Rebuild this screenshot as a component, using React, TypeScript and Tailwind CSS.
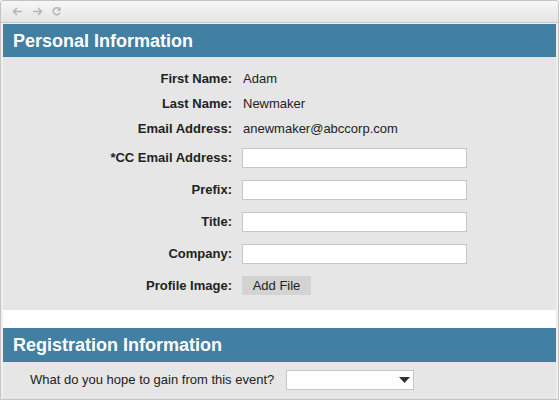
import React from "react";

const font = { fontFamily: '"Liberation Sans", Arial, Helvetica, sans-serif' };

function TextRow({ label, value }: { label: string; value: string }) {
  return (
    <div className="flex h-[25px] items-center">
      <div className="w-[229px] shrink-0 text-right font-bold text-[13px] text-[#222]">{label}</div>
      <div className="ml-[11px] text-[13px] text-[#222]">{value}</div>
    </div>
  );
}

function InputRow({ label }: { label: string }) {
  return (
    <div className="flex h-[20px] items-center">
      <div className="w-[229px] shrink-0 text-right font-bold text-[13px] text-[#222]">{label}</div>
      <div className="ml-[10px] h-[20px] w-[225px] border border-[#c6c6c6] bg-white" />
    </div>
  );
}

export default function App() {
  return (
    <div className="h-[402px] w-[560px] bg-white" style={font}>
      <div className="flex h-[400px] w-[559px] flex-col overflow-hidden rounded-t-[3px] border border-[#c4c4c4] bg-[#efefef]">
        {/* toolbar */}
        <div className="flex h-[22px] shrink-0 items-center gap-[9px] border-b border-[#c9c9c9] bg-gradient-to-b from-[#f7f7f7] to-[#e4e4e4] pl-[11px]">
          <svg width="11" height="9" viewBox="0 0 11 9" fill="none" stroke="#b3b3b3" strokeWidth="1.4">
            <path d="M10 4.5H1.5M5 1L1.5 4.5L5 8" />
          </svg>
          <svg width="11" height="9" viewBox="0 0 11 9" fill="none" stroke="#b3b3b3" strokeWidth="1.4">
            <path d="M1 4.5H9.5M6 1L9.5 4.5L6 8" />
          </svg>
          <svg width="9" height="9" viewBox="0 0 9 9" fill="none" stroke="#b3b3b3" strokeWidth="1.4">
            <path d="M7.6 2.2A3.5 3.5 0 1 0 8 5.5" />
            <path d="M8 0.5V3H5.5" />
          </svg>
        </div>
        <div className="flex flex-1 flex-col px-[2px] pt-[1px]">
          {/* Personal Information */}
          <div className="flex h-[33px] shrink-0 items-center bg-[#417fa3] pl-[10px] pt-[1px] text-[18px] font-bold text-white">
            Personal Information
          </div>
          <div className="flex h-[253px] shrink-0 flex-col bg-[#e6e6e6] pt-[9px]">
            <TextRow label="First Name:" value="Adam" />
            <TextRow label="Last Name:" value="Newmaker" />
            <TextRow label="Email Address:" value="anewmaker@abccorp.com" />
            <div className="mt-[7px] flex flex-col gap-[12px]">
              <InputRow label="*CC Email Address:" />
              <InputRow label="Prefix:" />
              <InputRow label="Title:" />
              <InputRow label="Company:" />
              <div className="flex h-[19px] items-center">
                <div className="w-[229px] shrink-0 text-right font-bold text-[13px] text-[#222]">Profile Image:</div>
                <div className="ml-[10px] flex h-[19px] w-[69px] items-center justify-center bg-[#d3d3d3] text-[13px] text-[#222]">
                  Add File
                </div>
              </div>
            </div>
          </div>
          <div className="h-[18px] shrink-0 bg-white" />
          {/* Registration */}
          <div className="flex h-[34px] shrink-0 items-center bg-[#417fa3] pl-[10px] text-[18px] font-bold text-white">
            Registration Information
          </div>
          <div className="flex flex-1 items-center bg-[#e6e6e6] pb-[1px]">
            <div className="ml-[27px] text-[13px] text-[#222]">What do you hope to gain from this event?</div>
            <div className="ml-[12px] flex h-[20px] w-[128px] items-center justify-end border border-[#c6c6c6] bg-white pr-[3px]">
              <svg width="11" height="6" viewBox="0 0 11 6">
                <path d="M0 0H11L5.5 6Z" fill="#333" />
              </svg>
            </div>
          </div>
        </div>
      </div>
    </div>
  );
}
